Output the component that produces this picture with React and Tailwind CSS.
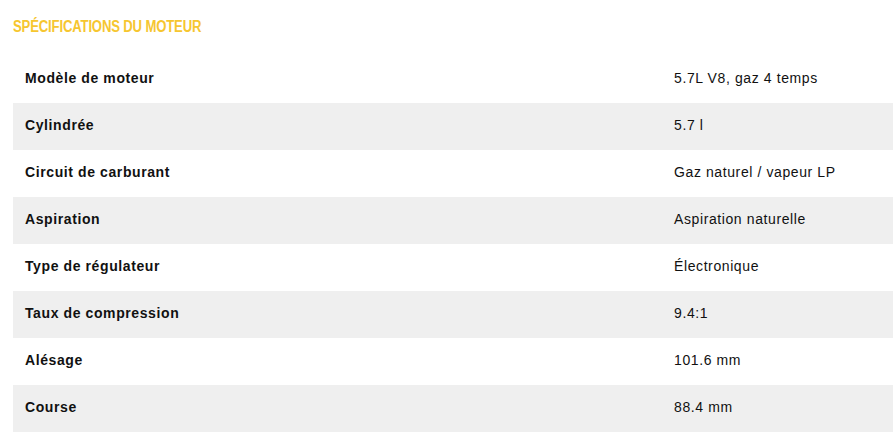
const specs = [
  ['Modèle de moteur', '5.7L V8, gaz 4 temps'],
  ['Cylindrée', '5.7 l'],
  ['Circuit de carburant', 'Gaz naturel / vapeur LP'],
  ['Aspiration', 'Aspiration naturelle'],
  ['Type de régulateur', 'Électronique'],
  ['Taux de compression', '9.4:1'],
  ['Alésage', '101.6 mm'],
  ['Course', '88.4 mm'],
];

export default function App() {
  return (
    <div className="w-[893px] h-[442px] overflow-hidden bg-white pl-[13px] font-['Liberation_Sans',Arial,sans-serif]">
      {/* Section title */}
      <div className="pt-[15px] h-[56px]">
        <h2 className="inline-block origin-left scale-x-[0.82] font-bold text-[16px] leading-[18px] text-[#f6c630] uppercase tracking-[-0.2px] whitespace-nowrap">
          Spécifications du moteur
        </h2>
      </div>

      {/* Spec table */}
      <div className="w-[880px]">
        {specs.map(([label, value], i) => (
          <div
            key={label}
            className={`grid grid-cols-[661px_1fr] h-[47px] items-center text-[14px] leading-[16px] tracking-[0.6px] text-[#111] pb-[4px] ${i % 2 === 1 ? 'bg-[#efefef]' : 'bg-white'}`}
          >
            <span className="pl-[12px] font-bold">{label}</span>
            <span>{value}</span>
          </div>
        ))}
      </div>
    </div>
  );
}
